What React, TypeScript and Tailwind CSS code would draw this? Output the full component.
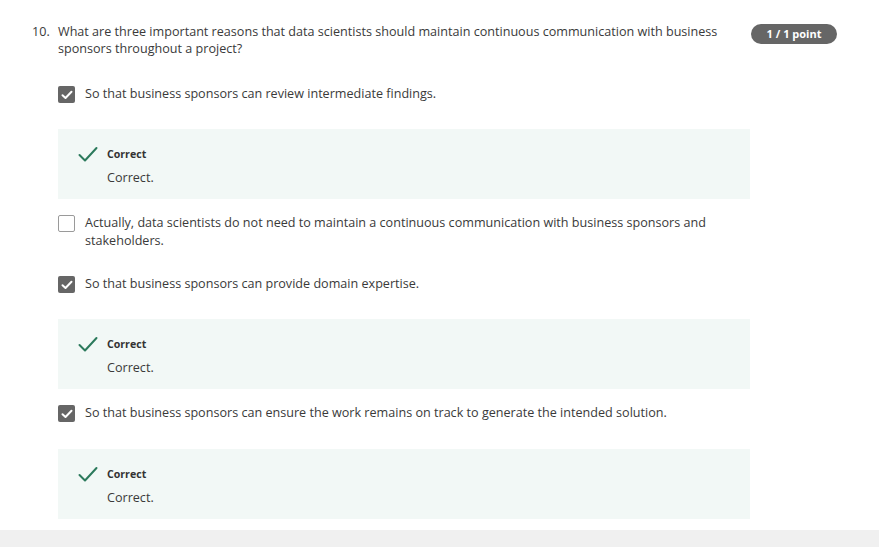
import React from 'react'

const font = { fontFamily: '"Open Sans", "Noto Sans", Arial, sans-serif' }

function Checkbox({ checked }: { checked: boolean }) {
  if (!checked) {
    return (
      <span className="mt-px h-[17px] w-[17px] flex-shrink-0 rounded-[2px] border-[1.5px] border-[#9a9a9a] bg-white" />
    )
  }
  return (
    <span className="mt-px flex h-[17px] w-[17px] flex-shrink-0 items-center justify-center rounded-[2px] bg-[#666666]">
      <svg width="12" height="10" viewBox="0 0 12 10" fill="none">
        <path d="M1.5 5.2 L4.5 8 L10.5 1.8" stroke="white" strokeWidth="2" strokeLinecap="round" strokeLinejoin="round" />
      </svg>
    </span>
  )
}

function Option({ checked, text, className }: { checked: boolean; text: string; className: string }) {
  return (
    <div className={`flex items-start gap-[10px] ${className}`}>
      <Checkbox checked={checked} />
      <p className="w-[640px] text-[12.6px] leading-[18px] text-[#3a3a3a]">{text}</p>
    </div>
  )
}

function Feedback({ className }: { className: string }) {
  return (
    <div className={`flex h-[70px] w-[692px] gap-[9px] bg-[#f2f8f6] pl-[20px] pt-[17px] ${className}`}>
      <svg width="20" height="17" viewBox="0 0 20 17" fill="none">
        <path d="M1.5 9 L7 14.5 L18.5 2" stroke="#2c7a5c" strokeWidth="2" strokeLinecap="round" strokeLinejoin="round" />
      </svg>
      <div className="flex flex-col">
        <span className="text-[10.6px] font-bold leading-[16px] text-[#333333]">Correct</span>
        <span className="mt-[7px] text-[12.6px] leading-[18px] text-[#3a3a3a]">Correct.</span>
      </div>
    </div>
  )
}

export default function App() {
  return (
    <div className="flex h-[547px] w-[879px] flex-col bg-white" style={font}>
      <div className="flex items-start pt-[23px]">
        <span className="w-[58px] pl-[32px] text-[12.6px] leading-[17px] text-[#3a3a3a]">10.</span>
        <p className="w-[672px] text-[12.6px] leading-[17px] text-[#3a3a3a]">
          What are three important reasons that data scientists should maintain continuous communication with business
          sponsors throughout a project?
        </p>
        <span className="ml-[21px] mt-px flex h-[20px] w-[86px] items-center justify-center rounded-full bg-[#666666] text-[11px] font-bold text-white">
          1 / 1 point
        </span>
      </div>

      <div className="flex flex-col pl-[58px]">
        <Option
          checked
          className="mt-[28px]"
          text="So that business sponsors can review intermediate findings."
        />
        <Feedback className="mt-[26px]" />
        <Option
          checked={false}
          className="mt-[15px]"
          text="Actually, data scientists do not need to maintain a continuous communication with business sponsors and stakeholders."
        />
        <Option
          checked
          className="mt-[25px]"
          text="So that business sponsors can provide domain expertise."
        />
        <Feedback className="mt-[26px]" />
        <Option
          checked
          className="mt-[15px]"
          text="So that business sponsors can ensure the work remains on track to generate the intended solution."
        />
        <Feedback className="mt-[27px]" />
      </div>

      <div className="mt-[11px] flex-1 bg-[#f0f0f0]" />
    </div>
  )
}
